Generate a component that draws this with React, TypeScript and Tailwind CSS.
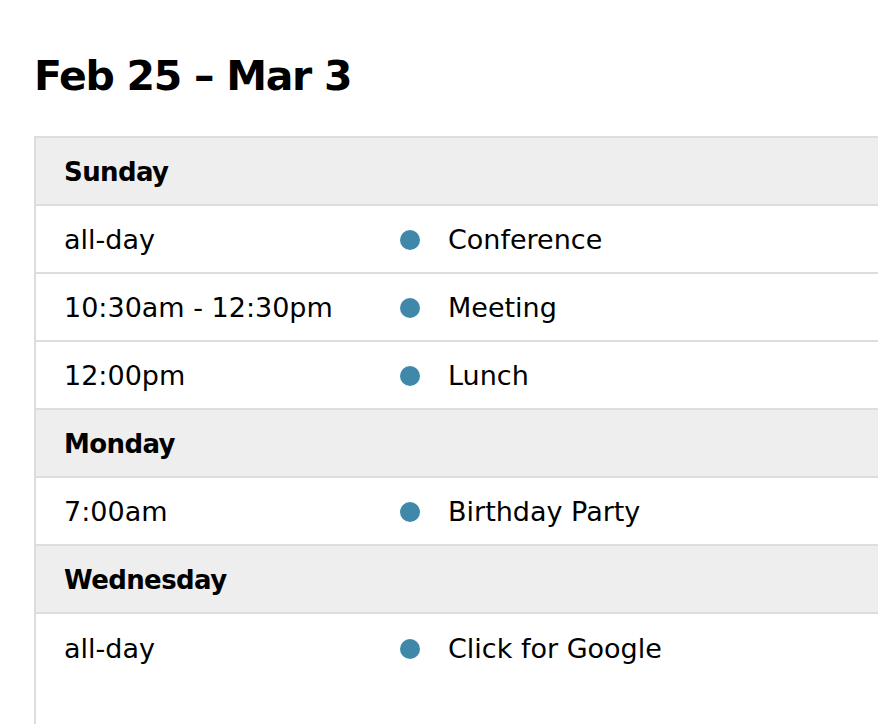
import React from 'react';

type Item = { time: string; title: string };
type Day = { day: string; items: Item[] };

const days: Day[] = [
  {
    day: 'Sunday',
    items: [
      { time: 'all-day', title: 'Conference' },
      { time: '10:30am - 12:30pm', title: 'Meeting' },
      { time: '12:00pm', title: 'Lunch' },
    ],
  },
  { day: 'Monday', items: [{ time: '7:00am', title: 'Birthday Party' }] },
  { day: 'Wednesday', items: [{ time: 'all-day', title: 'Click for Google' }] },
];

export default function App() {
  const last = days.length - 1;

  return (
    <div
      className="w-[878px] h-[724px] overflow-hidden bg-white text-black"
      style={{ fontFamily: '"DejaVu Sans", Verdana, sans-serif' }}
    >
      {/* Header title */}
      <h2 className="pl-[34px] pt-[51px] h-[136px] text-[41px] leading-[50px] font-bold tracking-[-1.3px]">
        Feb 25 – Mar 3
      </h2>

      {/* List view */}
      <div className="ml-[34px] w-[900px] h-[588px] border-l-2 border-t-2 border-[#dddddd]">
        {days.map((d, di) => (
          <div key={d.day}>
            <div className="h-[68px] flex items-center pl-[28px] pt-[2px] bg-[#eeeeee] border-b-2 border-[#dddddd] text-[26px] font-bold tracking-[-0.6px]">
              {d.day}
            </div>
            {d.items.map((it, i) => (
              <div
                key={i}
                className={`h-[68px] grid grid-cols-[336px_76px_1fr] items-center pt-[2px] text-[27px] ${
                  di === last && i === d.items.length - 1 ? '' : 'border-b-2 border-[#dddddd]'
                }`}
              >
                <span className="pl-[28px] whitespace-nowrap">{it.time}</span>
                <span className="pl-[28px]">
                  <span className="block w-[20px] h-[20px] rounded-full bg-[#3f88aa]" />
                </span>
                <span className="whitespace-nowrap">{it.title}</span>
              </div>
            ))}
          </div>
        ))}
      </div>
    </div>
  );
}
